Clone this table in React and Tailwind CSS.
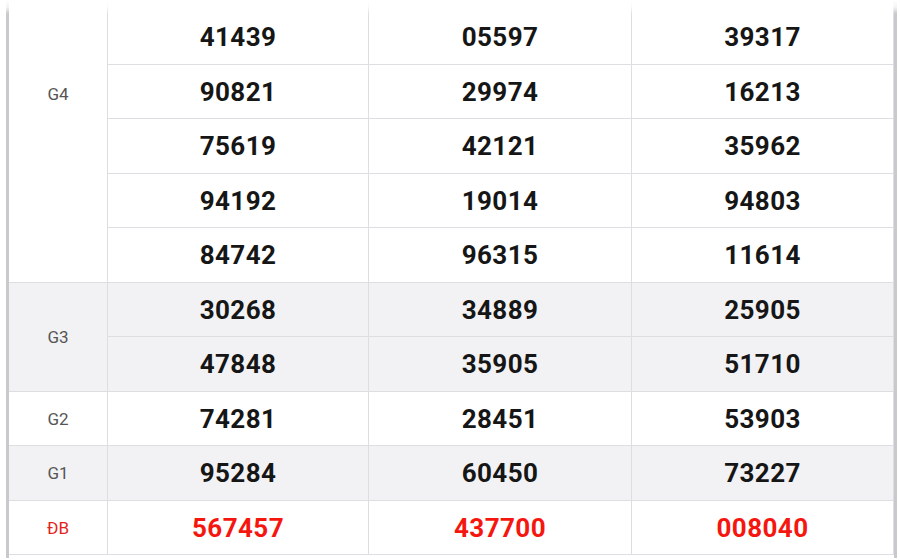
import React from "react";

const groups = [
  {
    label: "G4",
    shade: false,
    rows: [
      ["41439", "05597", "39317"],
      ["90821", "29974", "16213"],
      ["75619", "42121", "35962"],
      ["94192", "19014", "94803"],
      ["84742", "96315", "11614"],
    ],
  },
  {
    label: "G3",
    shade: true,
    rows: [
      ["30268", "34889", "25905"],
      ["47848", "35905", "51710"],
    ],
  },
  { label: "G2", shade: false, rows: [["74281", "28451", "53903"]] },
  { label: "G1", shade: true, rows: [["95284", "60450", "73227"]] },
  { label: "ĐB", shade: false, red: true, rows: [["567457", "437700", "008040"]] },
];

function Group({ g }) {
  return (
    <div className={`flex border-b border-[#dedee2] ${g.shade ? "bg-[#f2f2f4]" : "bg-white"}`}>
      <div
        className={`w-[99px] shrink-0 border-r border-[#dedee2] flex items-center justify-center pt-[2px] text-[17px] ${
          g.red ? "text-[#e3231b]" : "text-[#555]"
        } ${g.label === "G4" ? "pb-[105px]" : ""}`}
      >
        {g.label}
      </div>
      <div className="flex-1 flex flex-col">
        {g.rows.map((r, i) => (
          <div
            key={i}
            className={`grid grid-cols-[261px_263px_262px] ${
              i < g.rows.length - 1 ? "h-[54.5px] border-b border-[#dedee2]" : "h-[53.5px]"
            }`}
          >
            {r.map((n, j) => (
              <div
                key={j}
                className={`flex items-center justify-center pt-[2px] border-r border-[#dedee2] text-[26px] font-bold tracking-[0.4px] ${
                  g.red ? "text-[#f5170f]" : "text-[#161616]"
                }`}
              >
                {n}
              </div>
            ))}
          </div>
        ))}
      </div>
    </div>
  );
}

export default function App() {
  return (
    <div className="w-[900px] h-[560px] bg-white overflow-hidden relative font-['Roboto',sans-serif]">
      <div className="ml-[6px] w-[891px] border-l-[3px] border-r-[3px] border-[#c9c9cd] h-[558px]">
        <div className="grid grid-cols-[99px_261px_263px_262px] h-[10px]">
          <div className="border-r border-[#dedee2]" />
          <div className="border-r border-[#dedee2]" />
          <div className="border-r border-[#dedee2]" />
          <div className="border-r border-[#dedee2]" />
        </div>
        {groups.map((g) => (
          <Group key={g.label} g={g} />
        ))}
      </div>
      <div className="absolute inset-x-0 top-0 h-[14px] bg-linear-to-b from-white via-white/80 to-transparent" />
    </div>
  );
}
